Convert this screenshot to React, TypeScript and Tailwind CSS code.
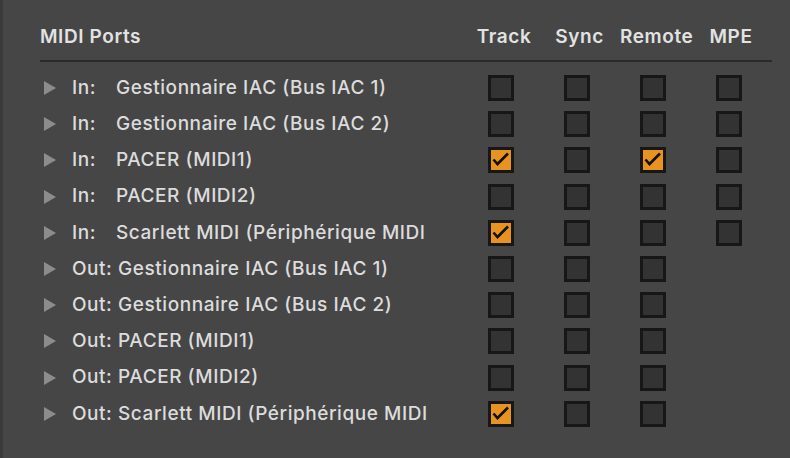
import React from "react";

type Row = { dir: "In" | "Out"; name: string; track: boolean; sync: boolean; remote: boolean; mpe: boolean | null };

const rows: Row[] = [
  { dir: "In", name: "Gestionnaire IAC (Bus IAC 1)", track: false, sync: false, remote: false, mpe: false },
  { dir: "In", name: "Gestionnaire IAC (Bus IAC 2)", track: false, sync: false, remote: false, mpe: false },
  { dir: "In", name: "PACER (MIDI1)", track: true, sync: false, remote: true, mpe: false },
  { dir: "In", name: "PACER (MIDI2)", track: false, sync: false, remote: false, mpe: false },
  { dir: "In", name: "Scarlett MIDI (Périphérique MIDI", track: true, sync: false, remote: false, mpe: false },
  { dir: "Out", name: "Gestionnaire IAC (Bus IAC 1)", track: false, sync: false, remote: false, mpe: null },
  { dir: "Out", name: "Gestionnaire IAC (Bus IAC 2)", track: false, sync: false, remote: false, mpe: null },
  { dir: "Out", name: "PACER (MIDI1)", track: false, sync: false, remote: false, mpe: null },
  { dir: "Out", name: "PACER (MIDI2)", track: false, sync: false, remote: false, mpe: null },
  { dir: "Out", name: "Scarlett MIDI (Périphérique MIDI", track: true, sync: false, remote: false, mpe: null },
];

function Box({ checked }: { checked: boolean }) {
  return (
    <div
      className={
        "w-[26px] h-[26px] border-[3px] border-[#171717] flex items-center justify-center " +
        (checked ? "bg-[#e8921f]" : "bg-[#333333]")
      }
    >
      {checked && (
        <svg width="26" height="26" viewBox="0 0 26 26" className="shrink-0 -m-[3px]">
          <path d="M5.5 12.5 L9.5 17 L20 6.5" fill="none" stroke="#111111" strokeWidth="2.6" strokeLinecap="butt" strokeLinejoin="miter" />
        </svg>
      )}
    </div>
  );
}

function Cell({ v }: { v: boolean | null }) {
  return <div className="w-[76px] flex justify-center">{v !== null && <Box checked={v} />}</div>;
}

export default function App() {
  return (
    <div
      className="w-[790px] h-[458px] bg-[#464646] flex text-[#dcdcdc]"
      style={{ fontFamily: "Inter, 'Noto Sans', sans-serif" }}
    >
      <div className="w-[3px] bg-[#3a3a3a]" />
      <div className="flex-1 pl-[37px] pr-[18px] pt-[24px]">
        <div className="flex items-center h-[26px] font-semibold text-[19px] tracking-[0.6px] text-[#e2e2e2]">
          <div className="w-[423px]">MIDI Ports</div>
          <div className="w-[76px] text-center pl-[6px]">Track</div>
          <div className="w-[76px] text-center pl-[5px]">Sync</div>
          <div className="w-[76px] text-center pl-[5px]">Remote</div>
          <div className="w-[76px] text-center pl-[4px]">MPE</div>
        </div>
        <div className="mt-[10px] h-[2px] bg-[#2a2a2a] w-[732px]" />
        <div className="pt-[8px] flex flex-col">
          {rows.map((r, i) => (
            <div key={i} className="flex items-center h-[36.2px] text-[19px] tracking-[0.55px] font-medium">
              <div className="w-[32px] pl-[4px] flex items-center">
                <svg width="12" height="14" viewBox="0 0 12 14">
                  <path d="M0 0 L12 7 L0 14 Z" fill="#8c8c8c" />
                </svg>
              </div>
              <div className="w-[366px] overflow-hidden whitespace-nowrap flex">
                {r.dir === "In" ? (
                  <>
                    <span className="w-[44px] shrink-0">In:</span>
                    <span>{r.name}</span>
                  </>
                ) : (
                  <span>Out: {r.name}</span>
                )}
              </div>
              <div className="w-[25px]" />
              <Cell v={r.track} />
              <Cell v={r.sync} />
              <Cell v={r.remote} />
              <Cell v={r.mpe} />
            </div>
          ))}
        </div>
      </div>
    </div>
  );
}
